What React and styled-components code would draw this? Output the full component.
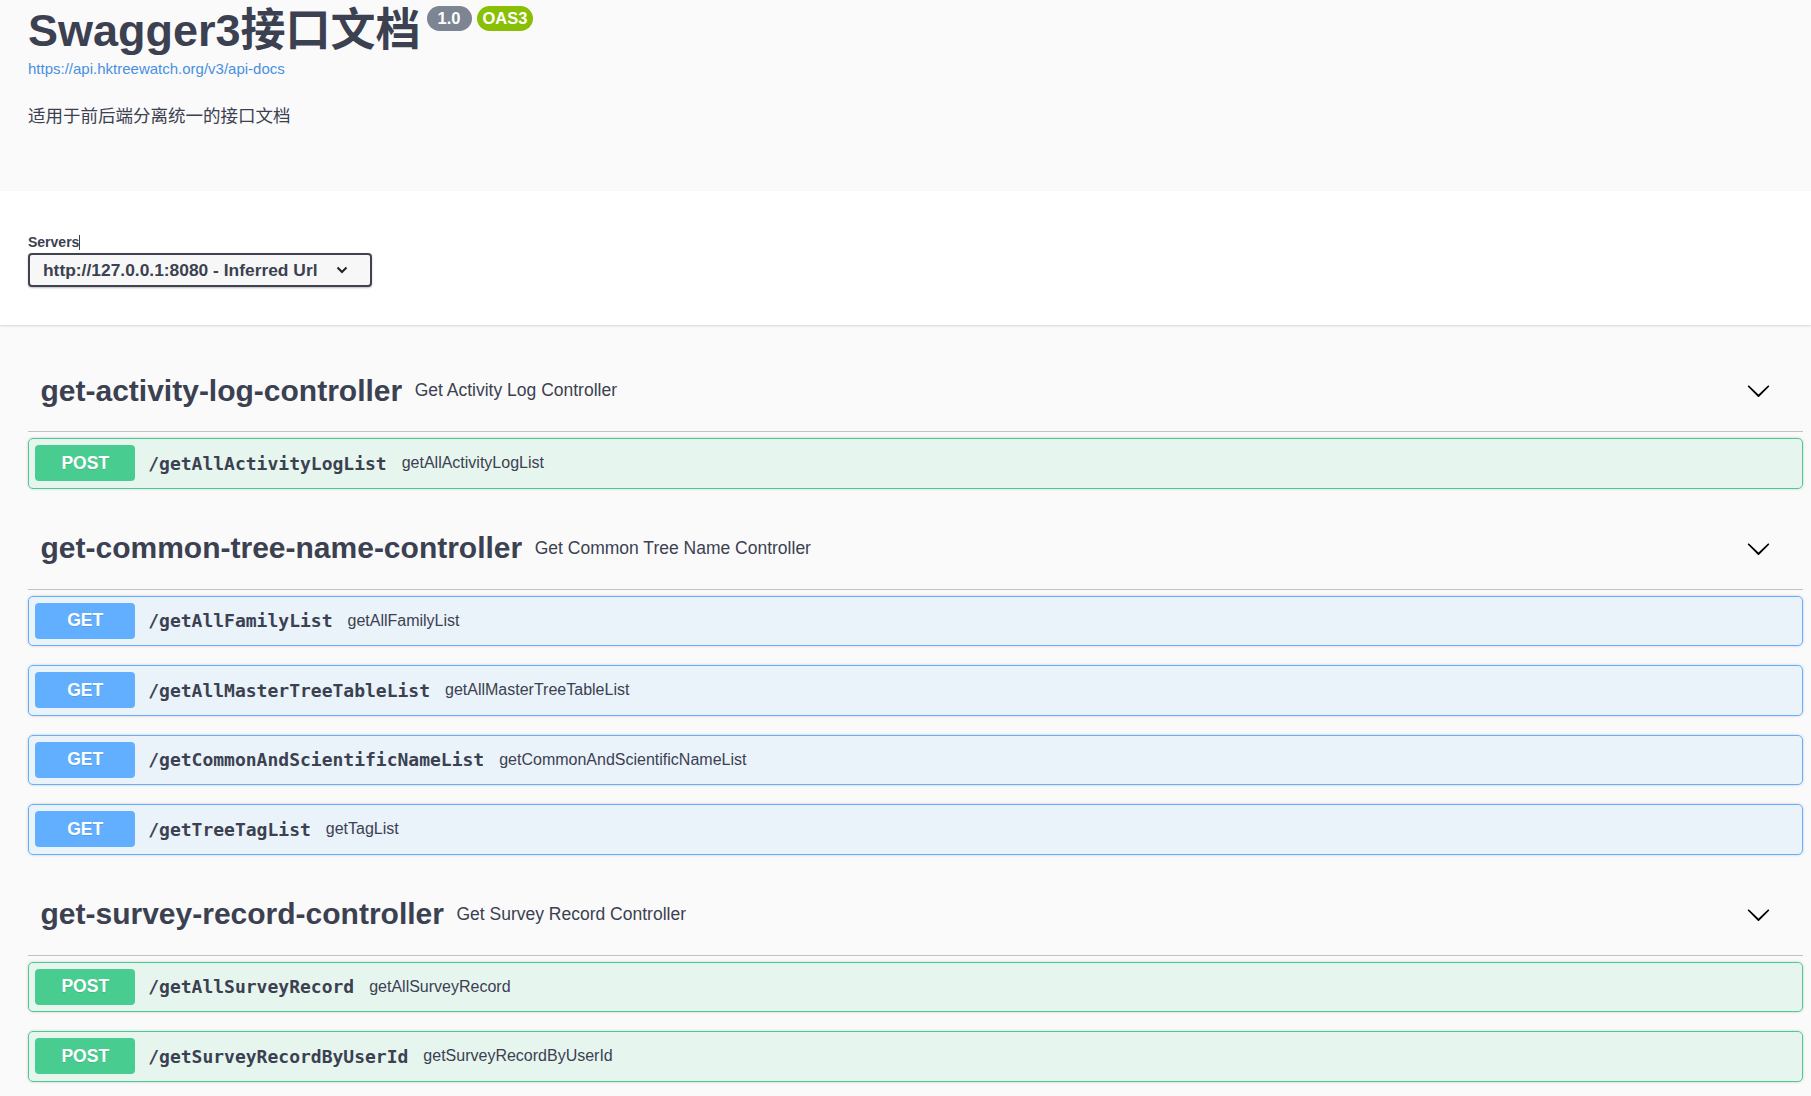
import React from "react";
import styled, { createGlobalStyle } from "styled-components";

const GlobalStyle = createGlobalStyle`
    body {
        margin: 0;
        background: #fafafa;
        font-family: "Liberation Sans", "Noto Sans CJK SC", sans-serif;
        color: #3b4151;
    }
`

const colors = {
    GET: "97, 175, 254",
    POST: "73, 204, 144",
};

const tags = [
    {
        name: "get-activity-log-controller",
        desc: "Get Activity Log Controller",
        ops: [
            { method: "POST", path: "/getAllActivityLogList", summary: "getAllActivityLogList" },
        ],
    },
    {
        name: "get-common-tree-name-controller",
        desc: "Get Common Tree Name Controller",
        ops: [
            { method: "GET", path: "/getAllFamilyList", summary: "getAllFamilyList" },
            { method: "GET", path: "/getAllMasterTreeTableList", summary: "getAllMasterTreeTableList" },
            { method: "GET", path: "/getCommonAndScientificNameList", summary: "getCommonAndScientificNameList" },
            { method: "GET", path: "/getTreeTagList", summary: "getTagList" },
        ],
    },
    {
        name: "get-survey-record-controller",
        desc: "Get Survey Record Controller",
        ops: [
            { method: "POST", path: "/getAllSurveyRecord", summary: "getAllSurveyRecord" },
            { method: "POST", path: "/getSurveyRecordByUserId", summary: "getSurveyRecordByUserId" },
        ],
    },
];

const Wrapper = styled.div`
    padding: 0 8px 0 28px;
`

const InfoContainer = styled.div`
    background: #fafafa;
    padding: 5px 0 63px;
`

const Title = styled.h2`
    display: flex;
    align-items: flex-start;
    margin: 0;
    font-size: 45px;
    line-height: 52px;
    font-weight: 700;
    color: #3b4151;
`

const Badge = styled.span`
    display: inline-block;
    margin-left: ${(props) => props.$first ? "6px" : "5px"};
    margin-top: 1px;
    padding: 0 ${(props) => props.$first ? "11px" : "6px"};
    border-radius: 57px;
    background: ${(props) => props.$color};
    color: #fff;
    font-size: 16.5px;
    line-height: 25px;
    font-weight: 700;
`

const BaseUrl = styled.a`
    display: block;
    margin-top: 3px;
    font-size: 15px;
    line-height: 18px;
    color: #4990e2;
    text-decoration: none;
`

const Description = styled.p`
    margin: 26px 0 0;
    font-size: 17.5px;
    line-height: 24px;
    color: #3b4151;
`

const SchemeContainer = styled.div`
    background: #fff;
    box-shadow: 0 1px 2px 0 rgba(0, 0, 0, 0.15);
    padding: 43px 0 38px;
    margin-bottom: 25px;
`

const ServersTitle = styled.div`
    font-size: 14px;
    line-height: 17px;
    font-weight: 700;
    color: #3b4151;
    display: flex;
    align-items: center;
`

const Caret = styled.span`
    display: inline-block;
    width: 1px;
    height: 15px;
    background: #3b4151;
`

const SelectBox = styled.div`
    display: inline-flex;
    align-items: center;
    justify-content: space-between;
    box-sizing: border-box;
    height: 34px;
    width: 344px;
    margin-top: 2px;
    padding: 0 22px 0 13px;
    border: 2px solid #41444e;
    border-radius: 4px;
    background: #f7f7f7;
    box-shadow: 0 1px 2px 0 rgba(0, 0, 0, 0.25);
    font-size: 17.4px;
    font-weight: 700;
    color: #3b4151;
`

const TagSection = styled.div`
    display: flex;
    flex-direction: column;
`

const TagHeader = styled.div`
    display: flex;
    align-items: center;
    box-sizing: border-box;
    height: 82px;
    padding: 0 32px 0 12.5px;
    margin-bottom: 6px;
    border-bottom: 1px solid rgba(59, 65, 81, 0.3);
`

const TagTitle = styled.span`
    font-size: 30px;
    font-weight: 700;
    color: #3b4151;
`

const TagDesc = styled.small`
    padding-left: 12.5px;
    font-size: 17.5px;
    color: #3b4151;
`

const ExpandButton = styled.button`
    margin-left: auto;
    padding: 0;
    border: none;
    background: none;
    display: flex;
    cursor: pointer;
`

const OpBlock = styled.div`
    display: flex;
    align-items: center;
    padding: 6.25px;
    margin-bottom: 19px;
    border: 1px solid rgb(${(props) => props.$rgb});
    border-radius: 5px;
    background: rgba(${(props) => props.$rgb}, 0.1);
    box-shadow: 0 0 3px rgba(0, 0, 0, 0.19);
`

const Method = styled.span`
    display: flex;
    align-items: center;
    justify-content: center;
    width: 100px;
    height: 36px;
    border-radius: 4px;
    background: rgb(${(props) => props.$rgb});
    color: #fff;
    font-size: 17.5px;
    font-weight: 700;
    text-shadow: 0 1px 0 rgba(0, 0, 0, 0.1);
`

const Path = styled.span`
    padding: 0 13px;
    font-family: "DejaVu Sans Mono", monospace;
    font-size: 18px;
    font-weight: 700;
    color: #3b4151;
`

const Summary = styled.span`
    padding-left: 2px;
    font-size: 16px;
    color: #3b4151;
`

function Chevron() {
    return (
        <svg width="25" height="25" viewBox="0 0 20 20" fill="#000">
            <path d="M17.418 6.109c.272-.268.709-.268.979 0s.271.701 0 .969l-7.908 7.83c-.27.268-.707.268-.979 0l-7.908-7.83c-.27-.268-.27-.701 0-.969.271-.268.709-.268.979 0L10 13.25l7.418-7.141z" />
        </svg>
    );
}

function App() {
    return (
        <>
            <GlobalStyle />
            <InfoContainer>
                <Wrapper>
                    <Title>
                        <span>Swagger3接口文档</span>
                        <Badge $first $color="#7d8492">1.0</Badge>
                        <Badge $color="#89bf04">OAS3</Badge>
                    </Title>
                    <BaseUrl href="#">https://api.hktreewatch.org/v3/api-docs</BaseUrl>
                    <Description>适用于前后端分离统一的接口文档</Description>
                </Wrapper>
            </InfoContainer>
            <SchemeContainer>
                <Wrapper>
                    <ServersTitle>Servers<Caret /></ServersTitle>
                    <SelectBox>
                        <span>http://127.0.0.1:8080 - Inferred Url</span>
                        <svg width="12" height="8" viewBox="0 0 12 8">
                            <path d="M1.5 1.5l4.5 4.5 4.5-4.5" fill="none" stroke="#222" strokeWidth="2" />
                        </svg>
                    </SelectBox>
                </Wrapper>
            </SchemeContainer>
            <Wrapper>
                {
                    tags.map((tag) => (
                        <TagSection key={tag.name}>
                            <TagHeader>
                                <TagTitle>{tag.name}</TagTitle>
                                <TagDesc>{tag.desc}</TagDesc>
                                <ExpandButton><Chevron /></ExpandButton>
                            </TagHeader>
                            {
                                tag.ops.map((op) => (
                                    <OpBlock key={op.path} $rgb={colors[op.method]}>
                                        <Method $rgb={colors[op.method]}>{op.method}</Method>
                                        <Path>{op.path}</Path>
                                        <Summary>{op.summary}</Summary>
                                    </OpBlock>
                                ))
                            }
                        </TagSection>
                    ))
                }
            </Wrapper>
        </>
    );
}

export default App;
